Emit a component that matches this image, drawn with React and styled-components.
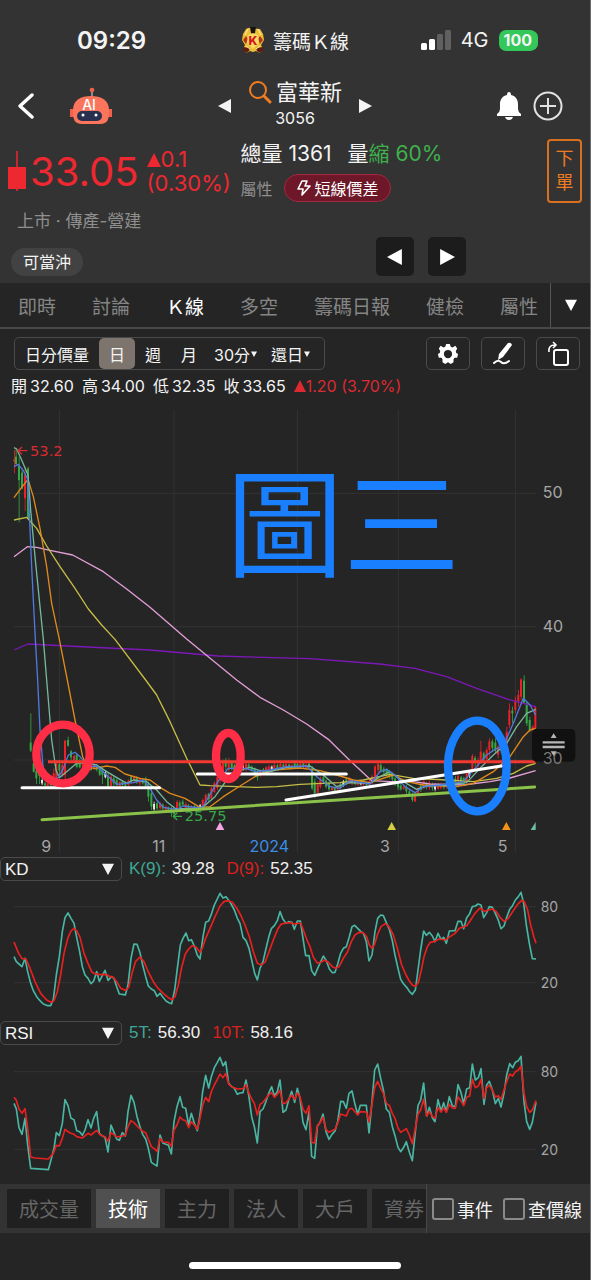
import { useState } from "react";
import styled, { createGlobalStyle } from "styled-components";

const TABS = ["即時", "討論", "Ｋ線", "多空", "籌碼日報", "健檢", "屬性"];
const PANELS = ["成交量", "技術", "主力", "法人", "大戶", "資券"];
const PERIODS = ["日分價量", "日", "週", "月", "30分▾", "還日▾"];
const PRICES = [
  ["開", "32.60"],
  ["高", "34.00"],
  ["低", "32.35"],
  ["收", "33.65"],
];

const AVERAGES = [
  {
    color: "#7d18b8",
    points:
      "42,750 84,732 200,738 450,750 654,768 930,776 1140,792 1245,805 1340,830 1430,865 1525,898 1607,920",
  },
  {
    color: "#e29ed6",
    points:
      "42,470 82,440 110,442 150,451 218,465 310,515 380,567 450,622 560,717 710,840 780,892 850,930 920,972 985,1018 1045,1077 1115,1142 1170,1145 1240,1145 1290,1152 1390,1155 1470,1145 1530,1134 1607,1112",
  },
  {
    color: "#c5bd45",
    points:
      "42,360 80,352 110,385 140,438 180,500 225,565 265,627 305,675 345,718 437,840 470,885 510,965 560,1075 600,1155 630,1157 770,1162 830,1160 900,1153 1020,1148 1090,1140 1170,1123 1240,1135 1340,1140 1420,1145 1490,1135 1540,1120 1580,1098 1607,1090",
  },
  {
    color: "#e08a1c",
    points:
      "42,293 65,262 84,238 100,290 120,385 140,500 155,610 178,718 202,840 225,960 248,1070 262,1102 285,1105 320,1098 345,1102 375,1122 420,1135 450,1140 480,1162 510,1180 555,1195 600,1222 630,1220 670,1190 720,1158 770,1127 820,1110 900,1104 960,1112 1010,1125 1060,1140 1110,1148 1180,1125 1220,1145 1270,1155 1370,1160 1420,1150 1480,1115 1530,1070 1570,1010 1590,990 1607,985",
  },
  {
    color: "#74b89c",
    points:
      "42,143 50,147 65,180 84,225 92,330 105,470 118,600 130,718 140,840 155,1020 168,1110 178,1133 200,1115 230,1090 255,1088 290,1095 320,1115 380,1150 400,1140 440,1145 470,1170 500,1205 525,1225 600,1226 610,1220 645,1190 680,1140 705,1115 750,1102 780,1112 810,1115 860,1102 930,1098 970,1125 1010,1160 1050,1148 1110,1150 1140,1130 1170,1115 1210,1145 1250,1168 1280,1158 1340,1155 1400,1148 1440,1105 1480,1065 1520,1030 1550,980 1580,940 1607,928",
  },
  {
    color: "#4f79dc",
    points:
      "42,200 55,193 70,212 82,235 88,340 95,500 106,718 113,840 120,990 130,1110 150,1142 175,1133 190,1105 205,1065 225,1057 240,1070 265,1100 290,1098 320,1125 350,1153 400,1148 430,1140 450,1165 470,1200 490,1222 530,1228 550,1218 600,1224 610,1218 635,1175 660,1135 685,1105 735,1105 770,1115 810,1110 860,1100 920,1098 950,1130 990,1160 1020,1165 1050,1142 1110,1152 1140,1115 1160,1108 1185,1125 1215,1160 1245,1178 1270,1160 1320,1155 1390,1145 1430,1100 1460,1065 1485,1048 1510,1038 1540,970 1570,895 1590,915 1607,945",
  },
];

// x, high, low, body top, body bottom, colour
const CANDLES = `
43 150 220 178 185 r|48 145 195 170 192 g|57 170 367 197 240 g|66 205 268 218 265 g
75 200 333 225 295 r|84 200 358 205 355 g|92 940 1056 1028 1052 g|101 1080 1118 1090 1115 g
109 1105 1152 1112 1135 g|118 1110 1152 1118 1128 g|126 1135 1155 1140 1150 w|135 1145 1160 1150 1156 g
143 1146 1160 1150 1158 r|152 1125 1158 1130 1156 g|161 1105 1150 1120 1145 r|169 1080 1158 1090 1150 r
178 1080 1125 1092 1112 g|187 1085 1130 1095 1125 r|195 1020 1145 1022 1125 r|204 1010 1040 1020 1037 g
213 1050 1080 1054 1072 g|222 1063 1085 1068 1080 r|230 1060 1105 1065 1100 g|239 1075 1105 1082 1102 g
248 1082 1110 1088 1100 r|256 1085 1105 1090 1100 g|265 1088 1110 1094 1108 r|273 1092 1112 1098 1110 g
282 1092 1110 1095 1108 r|290 1092 1115 1098 1110 g|299 1098 1128 1102 1124 g|307 1105 1152 1112 1125 g
316 1110 1135 1118 1132 w|324 1115 1160 1130 1158 g|333 1120 1162 1130 1158 r|341 1128 1160 1135 1150 g
350 1135 1158 1140 1155 g|359 1142 1160 1146 1158 r|367 1140 1160 1145 1155 g|376 1144 1160 1148 1158 g
385 1138 1160 1142 1155 r|393 1126 1150 1130 1145 g|402 1126 1150 1130 1142 r|410 1128 1152 1134 1146 g
419 1132 1158 1136 1150 r|428 1134 1154 1138 1150 g|437 1130 1160 1136 1158 g|445 1145 1205 1160 1190 g
454 1160 1230 1180 1220 g|462 1205 1232 1212 1228 w|471 1205 1230 1210 1225 g|480 1206 1230 1210 1224 r
488 1210 1232 1214 1226 g|497 1216 1234 1220 1230 r|505 1220 1238 1222 1232 g|514 1220 1250 1226 1240 g
522 1225 1255 1230 1242 g|531 1200 1235 1206 1230 r|539 1202 1225 1208 1220 g|548 1198 1220 1205 1214 g
557 1205 1230 1212 1225 r|565 1212 1230 1216 1226 g|574 1215 1232 1220 1228 r|583 1215 1232 1218 1228 g
592 1216 1232 1220 1226 g|600 1212 1230 1216 1224 w|608 1195 1222 1200 1220 r|617 1180 1215 1185 1210 r
626 1178 1205 1182 1198 g|634 1160 1200 1165 1195 r|643 1145 1180 1150 1176 r|652 1125 1170 1130 1164 r
660 1095 1150 1105 1140 r|669 1078 1125 1085 1115 r|677 1074 1110 1080 1100 g|686 1073 1115 1082 1110 r
695 1082 1112 1088 1106 g|703 1092 1118 1096 1110 g|712 1098 1118 1102 1112 r|720 1095 1118 1100 1115 g
729 1090 1112 1098 1108 w|738 1088 1115 1092 1108 r|746 1088 1108 1094 1104 g|755 1096 1115 1100 1112 g
764 1102 1128 1106 1120 g|772 1110 1142 1118 1132 g|781 1108 1130 1112 1126 r|790 1104 1125 1108 1120 g
798 1098 1122 1102 1116 r|806 1094 1118 1100 1110 r|815 1096 1114 1100 1108 w|823 1088 1112 1095 1106 r
832 1092 1110 1096 1105 g|841 1088 1110 1092 1104 r|850 1090 1108 1094 1102 g|858 1086 1108 1092 1104 r
867 1090 1108 1094 1104 g|875 1092 1108 1096 1106 r|884 1086 1106 1090 1102 g|892 1088 1106 1092 1100 g
901 1084 1104 1090 1098 r|910 1086 1106 1090 1100 g|918 1090 1108 1094 1104 r|927 1085 1108 1090 1102 g
936 1098 1170 1105 1165 g|944 1135 1195 1145 1180 g|953 1145 1182 1155 1178 r|961 1130 1165 1138 1160 r
970 1128 1148 1132 1144 g|978 1138 1165 1142 1160 g|987 1145 1172 1150 1168 g|996 1158 1175 1162 1170 r
1004 1160 1174 1164 1172 g|1013 1155 1172 1160 1168 r|1021 1148 1168 1152 1164 g|1030 1140 1160 1144 1155 w
1039 1132 1155 1138 1150 g|1047 1130 1152 1134 1146 r|1056 1138 1155 1142 1150 r|1065 1142 1156 1146 1152 g
1073 1140 1158 1146 1154 r|1082 1142 1156 1146 1153 w|1090 1142 1158 1146 1154 r|1099 1144 1158 1148 1155 g
1108 1140 1156 1144 1152 r|1116 1125 1154 1130 1150 r|1125 1095 1142 1100 1138 r|1134 1085 1120 1092 1110 r
1142 1088 1118 1095 1112 g|1151 1100 1122 1106 1116 g|1160 1105 1130 1110 1124 g|1168 1110 1135 1116 1128 g
1177 1118 1145 1122 1138 g|1185 1130 1158 1136 1152 g|1194 1145 1170 1150 1162 g|1202 1150 1172 1156 1168 g
1211 1156 1170 1160 1166 r|1219 1155 1182 1162 1174 g|1228 1168 1190 1174 1184 g|1237 1178 1206 1184 1200 g
1245 1180 1206 1186 1204 r|1254 1160 1185 1165 1180 r|1262 1150 1176 1156 1170 g|1271 1140 1168 1144 1160 r
1279 1146 1168 1150 1162 g|1288 1142 1170 1148 1164 r|1297 1148 1172 1152 1164 g|1305 1150 1174 1155 1168 w
1314 1148 1170 1152 1166 r|1322 1150 1168 1154 1164 r|1331 1150 1168 1154 1162 g|1340 1146 1166 1150 1162 r
1348 1144 1168 1150 1160 g|1357 1140 1162 1146 1158 r|1366 1128 1156 1136 1150 g|1374 1122 1150 1128 1144 r
1383 1128 1152 1132 1146 g|1391 1130 1156 1134 1150 g|1400 1115 1150 1120 1144 r|1408 1112 1134 1116 1128 w
1417 1062 1120 1068 1112 r|1425 1068 1100 1074 1085 g|1434 1072 1105 1080 1096 r|1442 1022 1092 1055 1088 r
1451 1055 1085 1060 1078 g|1460 1042 1086 1050 1078 r|1468 1015 1070 1024 1050 r|1477 1018 1056 1024 1044 g
1486 1015 1060 1028 1052 g|1494 1034 1075 1040 1064 r|1503 1030 1060 1036 1052 g|1511 1010 1050 1016 1044 r
1520 980 1036 995 1030 r|1528 910 985 930 975 r|1537 920 970 932 940 g|1546 890 940 900 930 r
1555 870 920 885 905 r|1563 835 900 838 890 r|1572 826 910 842 908 g|1580 905 978 910 970 g
1589 950 996 960 992 g|1598 975 1000 980 990 r|1606 918 985 922 984 r
`
  .trim()
  .split(/[|\n]/)
  .map((row) => row.split(" "));

const CANDLE_COLORS = { r: "#ec2028", g: "#35a845", w: "#e4e4e4" };

const KD = {
  fast: "42,320 49,335 57,342 66,350 75,325 83,365 92,400 100,422 110,440 120,452 130,462 143,467 152,467 160,448 169,375 178,320 187,245 195,203 204,189 213,205 222,220 230,262 239,305 247,350 255,375 264,385 273,401 281,393 290,365 298,394 315,361 324,391 334,380 342,385 350,410 358,432 367,433 376,435 384,405 393,325 402,282 411,283 420,308 428,345 437,380 445,408 454,417 463,422 471,439 480,430 489,442 498,453 507,458 515,461 524,420 532,355 541,285 549,265 558,249 566,272 574,269 583,288 592,316 600,327 609,260 617,217 626,213 635,190 643,165 660,130 669,144 678,140 687,152 695,165 703,180 712,205 720,220 729,262 738,272 747,295 755,330 764,370 772,390 780,355 789,335 797,300 806,262 814,236 823,227 832,212 840,185 849,208 858,220 866,215 876,217 883,238 892,213 901,213 909,265 917,317 927,317 935,362 944,376 953,355 970,318 979,332 988,357 997,368 1005,367 1013,342 1022,310 1030,295 1039,290 1048,260 1056,230 1064,226 1073,235 1082,244 1090,250 1099,275 1107,333 1116,315 1125,245 1133,205 1142,195 1150,197 1159,218 1168,238 1177,272 1185,315 1194,355 1202,388 1211,402 1220,412 1228,424 1237,433 1246,420 1254,360 1262,300 1271,243 1279,256 1288,247 1297,258 1305,275 1314,250 1323,268 1331,262 1339,280 1348,243 1365,242 1374,214 1383,214 1391,236 1400,203 1408,193 1417,170 1426,168 1434,162 1443,165 1451,203 1460,188 1468,170 1477,172 1486,190 1494,208 1503,236 1512,228 1520,202 1529,178 1537,168 1546,150 1555,140 1563,127 1571,160 1579,225 1588,280 1597,326 1608,327",
  slow: "42,276 55,308 66,326 78,327 90,355 105,395 122,430 140,450 153,457 162,452 172,425 182,375 192,310 204,263 213,243 222,235 231,243 240,262 252,310 264,340 276,367 285,371 300,374 318,373 328,379 340,382 350,395 362,415 376,421 386,412 396,370 407,334 420,321 432,335 445,366 460,395 475,416 490,430 505,443 516,449 525,440 535,405 545,352 556,312 566,297 577,287 588,291 600,307 608,292 617,265 630,235 645,200 660,168 672,155 685,152 697,157 710,174 722,195 735,225 748,260 760,305 772,340 785,345 796,335 807,305 820,270 833,238 843,223 856,219 873,218 882,222 902,219 910,240 920,268 930,290 940,322 952,339 963,337 973,330 985,337 997,350 1007,355 1017,350 1030,325 1042,307 1054,275 1065,255 1077,247 1090,248 1100,260 1108,285 1116,295 1123,285 1133,252 1143,230 1156,221 1167,230 1180,255 1192,295 1205,345 1218,375 1228,393 1237,405 1245,409 1255,398 1264,360 1272,320 1282,290 1291,277 1305,274 1317,267 1335,270 1350,260 1365,250 1378,235 1390,231 1400,227 1410,213 1425,190 1440,174 1453,184 1465,180 1478,177 1488,184 1500,202 1512,214 1525,205 1540,182 1553,163 1565,151 1573,155 1583,180 1592,225 1602,262 1608,280",
};

const RSI = {
  fast: "42,265 49,282 57,338 66,358 75,310 83,390 92,460 145,464 153,435 162,400 169,353 178,362 187,325 195,254 204,272 213,310 222,314 230,347 239,350 247,361 255,345 264,314 273,339 281,310 290,290 298,355 307,363 315,367 324,411 333,330 341,350 350,372 358,376 367,353 376,363 384,290 393,241 402,262 411,305 420,335 428,358 437,372 445,400 454,442 463,448 471,453 480,360 489,385 498,388 505,390 514,417 522,320 531,275 540,245 548,277 557,280 566,330 574,295 583,325 592,347 600,300 608,230 617,181 626,219 634,185 643,158 652,142 660,127 669,152 677,140 686,205 695,215 703,220 712,238 720,234 729,233 738,195 746,240 755,305 763,335 772,384 780,290 789,282 797,262 806,235 815,215 823,242 832,230 840,195 849,292 858,285 866,255 875,229 884,262 892,220 900,250 909,322 918,344 927,290 935,424 944,430 952,335 961,320 969,297 978,350 987,373 996,358 1005,348 1013,320 1022,259 1030,260 1039,280 1047,235 1056,228 1065,268 1073,298 1081,271 1099,271 1107,354 1116,260 1124,165 1133,147 1142,190 1150,225 1159,282 1168,292 1177,335 1185,362 1194,397 1202,410 1211,397 1219,380 1228,412 1237,437 1245,360 1254,272 1262,255 1271,204 1280,303 1288,277 1297,308 1305,320 1314,254 1323,288 1331,263 1339,290 1348,245 1357,272 1366,275 1374,209 1383,233 1391,266 1400,222 1409,218 1417,147 1426,195 1435,188 1443,161 1452,268 1460,210 1468,199 1477,225 1486,266 1495,250 1503,276 1512,235 1520,180 1529,146 1538,158 1546,142 1555,137 1563,124 1572,260 1580,320 1589,343 1597,322 1608,262",
  slow: "42,247 49,256 57,282 66,295 75,281 83,340 92,426 105,429 145,432 160,415 169,391 178,393 187,370 195,343 210,354 222,358 230,365 247,369 264,355 273,360 290,346 300,359 315,365 324,379 333,353 341,358 350,366 367,363 376,361 384,335 393,317 402,323 411,333 428,349 437,353 445,372 454,395 463,401 471,409 480,370 489,381 505,382 514,394 522,345 531,330 540,306 548,314 557,317 566,338 574,320 583,330 592,343 600,310 608,270 617,247 626,260 634,230 643,210 652,193 660,177 669,188 677,175 686,207 695,215 712,222 729,221 738,209 746,232 755,252 763,265 772,300 780,268 789,262 806,240 815,233 823,247 832,238 840,226 849,266 858,263 875,240 884,253 892,234 900,245 909,283 918,295 927,272 935,382 944,384 952,332 961,322 969,307 978,343 987,352 996,347 1005,343 1013,325 1022,297 1039,303 1047,283 1056,280 1073,300 1081,290 1099,291 1107,320 1116,268 1124,218 1133,199 1142,220 1150,235 1159,265 1168,271 1177,295 1185,310 1194,340 1202,352 1219,341 1228,360 1237,386 1245,345 1254,297 1262,285 1271,253 1280,303 1288,290 1297,305 1305,310 1314,277 1323,291 1331,279 1339,292 1348,268 1357,279 1366,280 1374,246 1383,258 1391,272 1400,247 1409,243 1417,193 1426,218 1435,213 1443,193 1452,250 1460,218 1468,211 1477,225 1486,246 1495,242 1503,253 1512,225 1520,200 1529,177 1538,183 1546,170 1555,165 1563,154 1572,235 1580,275 1589,292 1597,285 1608,257",
};

function Triangle({ dir = "down", size = 14 }) {
  const shapes = {
    down: "0,1 14,1 7,14",
    left: "13,0 13,14 0,7",
    right: "1,0 14,7 1,14",
    up: "7,0 14,14 0,14",
  };
  return (
    <svg width={size} height={size} viewBox="0 0 14 14" aria-hidden="true">
      <polygon points={shapes[dir]} fill="currentColor" />
    </svg>
  );
}

function AppLogo() {
  return (
    <svg width="24" height="26" viewBox="0 0 24 26" aria-hidden="true">
      <path d="M2 7L5 2Q8 0 12 1T19 2L22 7 23 13 20 18 22 22 19 26 15 24 12 25 9 24 5 26 2 22 4 18 1 13Z" fill="#eebc35" />
      <path d="M9 0H15L14 6 12 8 10 6Z" fill="#171310" />
      <path d="M5 9L2 13 5 17 7 12ZM19 9L22 13 19 17 17 12Z" fill="#b3331c" />
      <path d="M2 20L9 21 8 24 5 26 2 23ZM22 20L15 21 16 24 19 26 22 23Z" fill="#5e1c12" />
      <path d="M4 8L7 2M20 8L17 2M5 19L9 22M19 19L15 22" stroke="#fff3ac" strokeWidth="1" />
      <path d="M7 8L12 6 17 8 18 16 12 22 6 16Z" fill="#f8da62" />
      <text x="12" y="18" textAnchor="middle" fontFamily="Inter, sans-serif" fontWeight="800" fontSize="12" fill="#d4161c">K</text>
    </svg>
  );
}

function RobotIcon() {
  return (
    <svg width="44" height="38" viewBox="0 0 44 38" aria-hidden="true">
      <path d="M23 4V12" stroke="#aaa" strokeWidth="1.5" />
      <circle cx="23" cy="3" r="2.3" fill="#f2614b" />
      <path d="M1 22H5V30H1ZM39 22H43V30H39Z" fill="#f2614b" />
      <path d="M4 23C4 13 12 9 22 9S40 13 40 23C40 32 39 37 31 37H13C5 37 4 32 4 23Z" fill="#fb745c" />
      <rect x="8" y="24" width="25" height="10" rx="5" fill="#28304f" />
      <circle cx="14" cy="28" r="1.5" fill="#fff" />
      <circle cx="27" cy="28" r="1.5" fill="#fff" />
      <text x="20" y="23" textAnchor="middle" fontFamily="Inter, sans-serif" fontSize="14" fontWeight="500" fill="#fff">AI</text>
    </svg>
  );
}

function PriceChart() {
  return (
    <Chart viewBox="0 0 1770 1368" role="img" aria-label="日K線圖">
      <g stroke="#333" strokeWidth="3">
        {[178, 522, 892, 1195, 1546].map((x) => (
          <line key={x} x1={x} x2={x} y1="30" y2="1358" />
        ))}
        {[280, 680, 1080].map((y) => (
          <line key={y} x1="42" x2="1608" y1={y} y2={y} />
        ))}
      </g>
      {CANDLES.map(([x, high, low, top, bottom, color]) => (
        <g key={x} fill={CANDLE_COLORS[color]}>
          <rect x={x - 1} y={high} width="3" height={low - high} opacity="0.8" />
          <rect x={x - 3} y={top} width="6" height={bottom - top} />
        </g>
      ))}
      {AVERAGES.map((line) => (
        <ChartLine key={line.color} points={line.points} stroke={line.color} />
      ))}
      <g fontFamily="DejaVu Sans, sans-serif" fontSize="44">
        <path d="M82 152H54M66 141L54 152 66 163" fill="none" stroke="#d92b30" strokeWidth="4" />
        <text x="90" y="167" fill="#d92b30">53.2</text>
        <path d="M546 1249H520M532 1238L520 1249 532 1260" fill="none" stroke="#35a845" strokeWidth="4" />
        <text x="554" y="1264" fill="#35a845">25.75</text>
      </g>
      <g fill="none" strokeLinecap="round">
        <path d="M144 1085H1606" stroke="#f2382f" strokeWidth="9" strokeLinecap="butt" />
        <path d="M126 1259L1604 1161" stroke="#8bc34a" strokeWidth="9" />
        <path d="M66 1163H479M592 1122H1039M858 1200L1504 1098" stroke="#fff" strokeWidth="9" />
        <ellipse cx="189" cy="1062" rx="80" ry="88" stroke="#ff2d45" strokeWidth="25" />
        <ellipse cx="685" cy="1068" rx="37" ry="69" stroke="#ff2d45" strokeWidth="25" />
        <ellipse cx="1432" cy="1098" rx="88" ry="136" stroke="#197fff" strokeWidth="25" />
      </g>
      <text x="1030" y="504" textAnchor="middle" fontSize="351" fontFamily="Noto Sans CJK TC, sans-serif" fill="#197fff">
        圖三
      </text>
      <polygon points="647,1290 673,1290 660,1266" fill="#f5a6e6" />
      <polygon points="1162,1290 1188,1290 1175,1266" fill="#d6ce42" />
      <polygon points="1506,1290 1532,1290 1519,1266" fill="#f39318" />
      <polygon points="1592,1290 1607,1290 1607,1266" fill="#6cc0a0" />
      <g fontFamily="Inter, sans-serif" fontSize="48" fill="#a6a6a6">
        <text x="1628" y="295">50</text>
        <text x="1628" y="695">40</text>
        <g textAnchor="middle">
          <text x="139" y="1355">9</text>
          <text x="476" y="1355">11</text>
          <text x="808" y="1355" fill="#3a8ee6">2024</text>
          <text x="1155" y="1355">3</text>
          <text x="1508" y="1355">5</text>
        </g>
      </g>
      <rect x="1596" y="987" width="130" height="98" rx="14" fill="#111" />
      <g fontFamily="Inter, sans-serif" fontSize="48" fill="#777">
        <text x="1628" y="1093">30</text>
      </g>
      <path d="M1652 1014L1661 1000 1670 1014ZM1652 1054L1661 1068 1670 1054Z" fill="#b5b5b5" />
      <path d="M1628 1027H1694M1628 1041H1694" stroke="#b5b5b5" strokeWidth="7" />
    </Chart>
  );
}

function Oscillator({ name, series, top, lower }) {
  return (
    <Chart viewBox={`0 ${top} 1770 420`} role="img" aria-label={name}>
      <path d={`M42 170H1608M42 ${lower}H1608`} stroke="#333" strokeWidth="3" />
      <ChartLine points={series.fast} stroke="#49b5a3" $bold />
      <ChartLine points={series.slow} stroke="#e6211f" $bold />
      <g fontFamily="Inter, sans-serif" fontSize="42" fill="#a6a6a6">
        <text x="1622" y="185">80</text>
        <text x="1622" y={lower + 16}>20</text>
      </g>
    </Chart>
  );
}

function IndicatorHeader({ value, labels }) {
  return (
    <IndicatorRow>
      <SelectBox>
        <IndicatorSelect aria-label="技術指標" defaultValue={value}>
          <option>KD</option>
          <option>RSI</option>
        </IndicatorSelect>
        <Triangle size={12} />
      </SelectBox>
      {labels.map(([label, number, color]) => (
        <Reading key={label}>
          <Tint $color={color}>{label}:</Tint>
          {number}
        </Reading>
      ))}
    </IndicatorRow>
  );
}

export default function App() {
  const [tab, setTab] = useState("Ｋ線");
  const [period, setPeriod] = useState("日");
  const [panel, setPanel] = useState("技術");

  return (
    <Page>
      <GlobalStyle />
      <Header>
        <StatusBar>
          <Clock>09:29</Clock>
          <AppName>
            <AppLogo />
            籌碼Ｋ線
          </AppName>
          <Signals>
            <svg width="30" height="20" viewBox="0 0 30 20" aria-hidden="true">
              <rect x="0" y="13" width="6" height="7" rx="1.5" fill="#fff" />
              <rect x="8" y="9" width="6" height="11" rx="1.5" fill="#fff" />
              <rect x="16" y="4" width="6" height="16" rx="1.5" fill="#606060" />
              <rect x="24" y="0" width="6" height="20" rx="1.5" fill="#606060" />
            </svg>
            4G
            <Battery>100</Battery>
          </Signals>
        </StatusBar>

        <Nav>
          <NavSide>
            <IconButton aria-label="返回">
              <svg width="16" height="28" viewBox="0 0 16 28">
                <path d="M14 3L2 14 14 25" fill="none" stroke="#fff" strokeWidth="3.4" strokeLinecap="round" strokeLinejoin="round" />
              </svg>
            </IconButton>
            <RobotButton aria-label="AI">
              <RobotIcon />
            </RobotButton>
          </NavSide>
          <StockPicker>
            <IconButton aria-label="上一檔"><Triangle dir="left" /></IconButton>
            <StockTitle>
              <StockName>
                <svg width="24" height="24" viewBox="0 0 24 24" aria-hidden="true">
                  <circle cx="10" cy="10" r="8" fill="none" stroke="#ef7d22" strokeWidth="2" />
                  <path d="M16 16L22 22" stroke="#ef7d22" strokeWidth="3" strokeLinecap="round" />
                </svg>
                富華新
              </StockName>
              <StockCode>3056</StockCode>
            </StockTitle>
            <IconButton aria-label="下一檔"><Triangle dir="right" /></IconButton>
          </StockPicker>
          <NavSide $end>
            <IconButton aria-label="通知">
              <svg width="26" height="28" viewBox="0 0 26 28" fill="#fff">
                <path d="M11 3Q11 0 13 0T15 3C20 4 22 8 22 12V17Q22 20 25 22V24H1V22Q4 20 4 17V12C4 8 6 4 11 3ZM9 25H17Q16 28 13 28T9 25Z" />
              </svg>
            </IconButton>
            <IconButton aria-label="加入自選">
              <svg width="30" height="30" viewBox="0 0 30 30" fill="none" stroke="#e2e2e2" strokeWidth="2">
                <circle cx="15" cy="15" r="13.5" />
                <path d="M15 7V23M7 15H23" />
              </svg>
            </IconButton>
          </NavSide>
        </Nav>

        <Quote>
          <svg width="18" height="42" viewBox="0 0 18 42" aria-hidden="true">
            <path d="M9 1V41" stroke="#ee2830" strokeWidth="1.5" />
            <rect y="17" width="18" height="22" fill="#ee2830" />
          </svg>
          <Price>33.05</Price>
          <Change>
            <span><Triangle dir="up" size={14} />0.1</span>
            <span>(0.30%)</span>
          </Change>
          <Facts>
            <Volume>
              <span>總量 1361</span>
              <span>量<Tint $color="#3fb14d">縮 60%</Tint></span>
            </Volume>
            <Trait>
              屬性
              <TraitPill>
                <svg width="15" height="16" viewBox="0 0 15 16" fill="none" stroke="#fff" strokeWidth="1.6" strokeLinejoin="round" aria-hidden="true">
                  <path d="M6 1H11L9 6H14L6 15 7 9H2Z" />
                </svg>
                短線價差
              </TraitPill>
            </Trait>
          </Facts>
          <OrderButton>下單</OrderButton>
        </Quote>
        <Sector>上市 · 傳產-營建</Sector>
        <TagRow>
          <Tag>可當沖</Tag>
          <Stepper>
            <StepButton aria-label="前一日"><Triangle dir="left" size={16} /></StepButton>
            <StepButton aria-label="後一日"><Triangle dir="right" size={16} /></StepButton>
          </Stepper>
        </TagRow>
      </Header>

      <TabBar>
        <TabList>
          {TABS.map((name) => (
            <Tab key={name} $active={name === tab} onClick={() => setTab(name)}>
              {name}
            </Tab>
          ))}
        </TabList>
        <MoreButton aria-label="更多"><Triangle size={12} /></MoreButton>
      </TabBar>

      <Toolbar>
        <Periods>
          {PERIODS.map((name) => (
            <Period
              key={name}
              $active={name === period}
              $menu={name.endsWith("▾")}
              onClick={() => setPeriod(name)}
            >
              {name.replace("▾", "")}
              {name.endsWith("▾") && <Triangle size={6} />}
            </Period>
          ))}
        </Periods>
        <Tools>
          <ToolButton aria-label="設定">
            <svg width="22" height="22" viewBox="0 0 24 24">
              <path
                d="M10 1H14L15 4 17 5 20 3 22 6 20.500 9 21 11 23 12 22 16 19 16 18 18 18 21 15 23 12 21 9 23 6 21 6 18 5 16 2 16 1 12 3 11 3.500 9 2 6 4 3 7 5 9 4ZM12 7.500A4.500 4.500 0 1 0 12 16.500A4.500 4.500 0 1 0 12 7.500Z"
                fill="#fff"
                fillRule="evenodd"
              />
            </svg>
          </ToolButton>
          <ToolButton aria-label="畫線">
            <svg width="24" height="24" viewBox="0 0 24 24">
              <path d="M17 1Q20 0 21 3L12 15 7 18 8 12Z" fill="#fff" />
              <path d="M3 21Q7 17 10 20T18 19" fill="none" stroke="#fff" strokeWidth="2" strokeLinecap="round" />
            </svg>
          </ToolButton>
          <ToolButton aria-label="旋轉">
            <svg width="24" height="26" viewBox="0 0 24 26" fill="none" stroke="#fff">
              <rect x="8" y="9" width="14" height="15" rx="2" strokeWidth="2" />
              <path d="M3 11Q2 4 9 4M7 1L10 4 7 7" strokeWidth="1.6" />
            </svg>
          </ToolButton>
        </Tools>
      </Toolbar>

      <Ohlc>
        {PRICES.map(([label, price]) => (
          <OhlcItem key={label}>
            <span>{label}</span>
            {price}
          </OhlcItem>
        ))}
        <Tint $color="#dc2a30"><Triangle dir="up" size={12} />1.20 (3.70%)</Tint>
      </Ohlc>

      <PriceChart />
      <IndicatorHeader value="KD" labels={[["K(9)", "39.28", "#3fa595"], ["D(9)", "52.35", "#d8221f"]]} />
      <Oscillator name="KD" series={KD} top={90} lower={398} />
      <IndicatorHeader value="RSI" labels={[["5T", "56.30", "#3fa595"], ["10T", "58.16", "#d8221f"]]} />
      <Oscillator name="RSI" series={RSI} top={87} lower={403} />

      <BottomBar>
        <PanelList>
          {PANELS.map((name) => (
            <PanelButton key={name} $active={name === panel} onClick={() => setPanel(name)}>
              {name}
            </PanelButton>
          ))}
        </PanelList>
        <Checks>
          <Check><CheckBox type="checkbox" />事件</Check>
          <Check><CheckBox type="checkbox" />查價線</Check>
        </Checks>
      </BottomBar>
      <HomeArea><HomeBar /></HomeArea>
    </Page>
  );
}

const GlobalStyle = createGlobalStyle`
  * {
    box-sizing: border-box;
  }
  body {
    margin: 0;
    background: #252525;
  }
  button, select, input {
    font: inherit;
    color: inherit;
    margin: 0;
    padding: 0;
    border: none;
    background: transparent;
  }
  svg {
    flex-shrink: 0;
  }
`;

const Page = styled.div`
  display: flex;
  flex-direction: column;
  min-height: 100vh;
  overflow: hidden;
  border-right: 1px solid #6b6b6b;
  background: #252525;
  color: #f4f4f4;
  font-family: Inter, "Noto Sans CJK TC", sans-serif;
  font-size: 16px;
  white-space: nowrap;
`;

const Header = styled.header`
  padding-bottom: 7px;
  background: #333;
`;

const StatusBar = styled.div`
  display: grid;
  grid-template-columns: 1fr auto 1fr;
  align-items: center;
  height: 78px;
  padding: 2px 53px 0;
`;

const Clock = styled.span`
  padding-left: 24px;
  font-size: 24px;
  font-weight: 600;
`;

const AppName = styled.div`
  display: flex;
  align-items: center;
  gap: 8px;
  font-size: 19px;
`;

const Signals = styled.div`
  display: flex;
  align-items: center;
  justify-content: flex-end;
  gap: 10px;
  font-size: 20px;
`;

const Battery = styled.span`
  padding: 0 5px;
  border-radius: 7px;
  background: #34c759;
  font-size: 16px;
  font-weight: 700;
  line-height: 21px;
  box-shadow: 2px 0 0 -1px #34c759;
`;

const Nav = styled.nav`
  display: grid;
  grid-template-columns: 1fr auto 1fr;
  align-items: center;
  height: 52px;
  padding: 0 18px;
`;

const NavSide = styled.div`
  display: flex;
  align-items: center;
  justify-content: ${(props) => (props.$end ? "flex-end" : "flex-start")};
  gap: 11px;
  padding-right: ${(props) => (props.$end ? "9px" : "0")};
`;

const IconButton = styled.button`
  display: flex;
  align-items: center;
  cursor: pointer;
`;

const RobotButton = styled(IconButton)`
  margin-left: 24px;
`;

const StockPicker = styled.div`
  display: flex;
  align-items: center;
  gap: 16px;
`;

const StockTitle = styled.div`
  display: flex;
  flex-direction: column;
  align-items: center;
  padding-bottom: 4px;
`;

const StockName = styled.div`
  display: flex;
  align-items: center;
  gap: 4px;
  font-size: 22px;
  line-height: 28px;
`;

const StockCode = styled.div`
  font-size: 16px;
  line-height: 24px;
`;

const Quote = styled.section`
  display: flex;
  align-items: center;
  height: 77px;
  padding: 5px 8px 0;
`;

const Price = styled.div`
  margin-left: 4px;
  color: #ee2830;
  font-size: 40px;
`;

const Change = styled.div`
  display: flex;
  flex-direction: column;
  width: 94px;
  margin-left: 8px;
  color: #ee2830;
  font-size: 22px;
  line-height: 24px;
`;

const Facts = styled.div`
  display: flex;
  flex-direction: column;
  gap: 6px;
`;

const Volume = styled.div`
  display: flex;
  gap: 16px;
  font-size: 21px;
  line-height: 28px;
`;

const Tint = styled.span`
  color: ${(props) => props.$color};
`;

const Trait = styled.div`
  display: flex;
  align-items: center;
  gap: 11px;
  color: #8f8f8f;
`;

const TraitPill = styled.span`
  display: flex;
  align-items: center;
  gap: 4px;
  height: 28px;
  padding: 0 11px;
  border: 1px solid #a3283f;
  border-radius: 14px;
  background: #6d1728;
  color: #fff;
`;

const OrderButton = styled.button`
  width: 35px;
  height: 64px;
  margin-left: auto;
  border: 2px solid #d8701f;
  border-radius: 4px;
  color: #ee7c22;
  font-size: 18px;
  line-height: 24px;
  white-space: normal;
  padding: 0 6px;
`;

const Sector = styled.div`
  padding: 0 17px;
  color: #8f8f8f;
  font-size: 17px;
  line-height: 28px;
`;

const TagRow = styled.div`
  display: flex;
  justify-content: space-between;
  align-items: flex-end;
  height: 41px;
  padding: 0 124px 0 11px;
`;

const Tag = styled.span`
  padding: 0 12px;
  border-radius: 14px;
  background: #424242;
  line-height: 28px;
`;

const Stepper = styled.div`
  display: flex;
  gap: 14px;
`;

const StepButton = styled.button`
  display: grid;
  place-items: center;
  width: 38px;
  height: 39px;
  border-radius: 5px;
  background: #1c1c1c;
  color: #fff;
`;

const TabBar = styled.nav`
  display: flex;
  height: 46px;
  border-bottom: 2px solid #484848;
`;

const TabList = styled.div`
  display: flex;
  flex: 1;
  gap: 36px;
  padding-left: 18px;
  overflow: hidden;
`;

const Tab = styled.button`
  flex-shrink: 0;
  color: ${(props) => (props.$active ? "#fff" : "#858585")};
  font-size: 19px;
`;

const MoreButton = styled.button`
  display: grid;
  place-items: center;
  width: 40px;
  border-left: 1px solid #555;
  color: #fff;
`;

const Toolbar = styled.div`
  display: flex;
  justify-content: space-between;
  padding: 8px 10px 0 14px;
`;

const Periods = styled.div`
  display: flex;
  height: 33px;
  padding-right: 7px;
  border: 1px solid #4a4a4a;
  border-radius: 5px;
`;

const Period = styled.button`
  display: flex;
  align-items: center;
  gap: 1px;
  padding: 0 ${(props) => (props.$menu ? "7px" : "10px")};
  border-radius: 5px;
  background: ${(props) => (props.$active ? "#7d746e" : "transparent")};
`;

const Tools = styled.div`
  display: flex;
  gap: 11px;
`;

const ToolButton = styled.button`
  display: grid;
  place-items: center;
  width: 44px;
  height: 33px;
  border: 1px solid #4a4a4a;
  border-radius: 5px;
`;

const Ohlc = styled.div`
  display: flex;
  gap: 8px;
  padding: 2px 11px 0;
  line-height: 28px;
`;

const OhlcItem = styled.span`
  display: flex;
  gap: 3px;
`;

const Chart = styled.svg`
  display: block;
  width: 100%;
  height: auto;
`;

const ChartLine = styled.polyline`
  fill: none;
  stroke-width: ${(props) => (props.$bold ? 5 : 4)};
  stroke-linejoin: round;
`;

const IndicatorRow = styled.div`
  display: flex;
  align-items: center;
  gap: 12px;
  height: 24px;
  padding-top: 2px;
  font-family: "Liberation Sans", sans-serif;
  font-size: 17px;
`;

const SelectBox = styled.div`
  display: flex;
  align-items: center;
  width: 122px;
  height: 24px;
  padding: 0 7px 0 4px;
  margin-right: -5px;
  border: 1px solid #4a4a4a;
  border-radius: 5px;
`;

const IndicatorSelect = styled.select`
  flex: 1;
  appearance: none;
`;

const Reading = styled.span`
  display: flex;
  gap: 6px;
  color: #f0f0f0;
`;

const BottomBar = styled.div`
  display: flex;
  height: 49px;
  background: #333;
`;

const PanelList = styled.div`
  display: flex;
  flex: 1;
  gap: 5px;
  padding: 5px 0 5px 7px;
  overflow: hidden;
`;

const PanelButton = styled.button`
  flex-shrink: 0;
  padding: 0 12px;
  background: ${(props) => (props.$active ? "#505050" : "#202020")};
  color: ${(props) => (props.$active ? "#fff" : "#666")};
  font-size: 20px;
`;

const Checks = styled.div`
  display: flex;
  align-items: center;
  gap: 10px;
  padding: 0 8px 0 5px;
  border-left: 1px solid #484848;
`;

const Check = styled.label`
  display: flex;
  align-items: center;
  gap: 3px;
  font-size: 18px;
`;

const CheckBox = styled.input`
  appearance: none;
  width: 22px;
  height: 22px;
  border: 2px solid #8a8a8a !important;
  border-radius: 3px;
  &:checked {
    background: #197fff;
  }
`;

const HomeArea = styled.footer`
  display: flex;
  justify-content: center;
  padding: 29px 0 11px;
`;

const HomeBar = styled.div`
  width: 212px;
  height: 7px;
  border-radius: 4px;
  background: #fff;
`;
